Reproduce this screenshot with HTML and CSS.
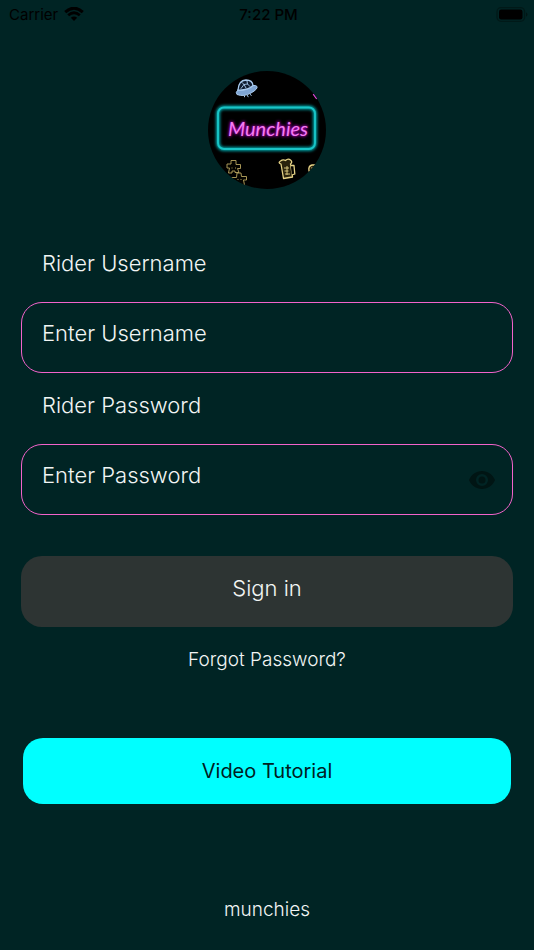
FILE: index.html
```html
<!DOCTYPE html>
<html lang="en">
<head>
<meta charset="utf-8">
<meta name="viewport" content="width=device-width, initial-scale=1">
<title>Munchies Rider</title>
<link rel="stylesheet" href="styles.css">
</head>
<body>
<header class="status">
  <div class="carrier">
    <span>Carrier</span>
    <svg width="20" height="14" viewBox="0 0 20 14" aria-hidden="true">
      <path d="M1.200 5.200Q10-2.800 18.800 5.200" fill="none" stroke="#000" stroke-width="3"/>
      <path d="M4.200 8.300Q10 3.200 15.800 8.300" fill="none" stroke="#000" stroke-width="2.800"/>
      <path d="M6.800 10.800Q10 8 13.200 10.800L10 14Z"/>
    </svg>
  </div>
  <time class="clock">7:22 PM</time>
  <svg class="battery" width="32" height="15" viewBox="0 0 32 15" aria-hidden="true">
    <rect x="1" y=".7" width="27.600" height="13.600" rx="4" fill="none" stroke="#001918" stroke-width="1.300"/>
    <rect x="3" y="2.500" width="23.500" height="10" rx="2.200"/>
    <path d="M30 5.200q3 2.300 0 4.600z" fill="#001615"/>
  </svg>
</header>
<main class="login">
  <svg class="logo" viewBox="0 0 118 118" role="img" aria-label="Munchies">
    <defs>
      <clipPath id="disc"><circle cx="59" cy="59" r="59"/></clipPath>
      <filter id="glow" x="-20%" y="-30%" width="140%" height="160%"><feGaussianBlur stdDeviation="1.700"/></filter>
    </defs>
    <g clip-path="url(#disc)">
      <rect width="118" height="118"/>
      <rect x="10" y="36.500" width="97" height="41.500" rx="6" fill="none" stroke="#00a9ad" stroke-width="4" filter="url(#glow)"/>
      <rect x="10" y="36.500" width="97" height="41.500" rx="6" fill="none" stroke="#19c5c7" stroke-width="1.900"/>
      <text class="neon halo" x="60" y="65" text-anchor="middle" filter="url(#glow)" aria-hidden="true">Munchies</text>
      <text class="neon" x="60" y="65" text-anchor="middle">Munchies</text>
      <g fill="none" stroke="#a9cbef" stroke-linecap="round" stroke-linejoin="round">
        <path d="M30 19Q27 21.500 29 23.500Q36 26 43 22Q50 18 49 15.500Q48 14 45 14.500Q40 19.500 30 19Z" fill="#7fa5d3" stroke-width="1"/>
        <path d="M30 19Q30.500 9.500 38 9Q44.500 9 45 14.500Q40 19.500 30 19Z" fill="#101d31" stroke-width="1.300"/>
        <path d="M33 17.500L36 13.500L34 11.500M36 13.500L39.500 13L42 15.500M39.500 13L39 10M36 13.500L38 17" stroke-width=".9"/>
        <path d="M36.500 25v.8M39.500 24.500l.6 1.300M42.500 23.500l.7 1" stroke-width="1"/>
      </g>
      <path d="M105.500 23l3 4 2-1" fill="none" stroke="#e448dd" stroke-width="2"/>
      <g fill="#050400" stroke="#b9a660" stroke-width=".9" stroke-linejoin="round">
        <path d="M23 89.500h5v4h4.500v4h-3l1.500 4h-4v-1.500h-3v2h-3.500l1-5h-2.500v-4h4zM24 96.500v1M27.500 96.500v1"/>
        <path d="M29 102h4l.5 3.500h5v3.500h-3l1 5h-4l-1.500-2-2 2h-3.500l1-4h-3v-3.500h5zM30 108v1M33 108v1"/>
        <g stroke="#e5d286">
          <path d="M73 93Q69.500 92 72.500 90Q75 88 77.500 89.500Q80 87 82.500 89Q85 91 82.500 93L84.500 106L75.500 107.500Z" fill="#2a230d" stroke-width="1.300"/>
          <path d="M82.800 94.500h3.200l.8 8.500-3 1" stroke-width="1.300"/>
          <path d="M76 97h5M76.500 100h4M77 103h5M79 95v9"/>
          <path d="M101 100q-1-5 3-6h7v7z" fill="#2a230d" stroke-width="1.300"/>
          <path d="M103 97h4M103 99h4"/>
        </g>
      </g>
    </g>
  </svg>
  <form class="form">
    <div class="field">
      <label for="username">Rider Username</label>
      <input id="username" type="text" placeholder="Enter Username">
    </div>
    <div class="field">
      <label for="password">Rider Password</label>
      <div class="secret">
        <input id="password" type="password" placeholder="Enter Password">
        <button class="reveal" type="button" aria-label="Show password">
          <svg width="26" height="18" viewBox="0 0 26 18" aria-hidden="true">
            <path fill="#001514" fill-rule="evenodd" d="M13 0C7 0 2.300 3.600 0 9c2.300 5.400 7 9 13 9s10.700-3.600 13-9C23.700 3.600 19 0 13 0zm0 15a6 6 0 1 1 0-12 6 6 0 0 1 0 12zm0-2.500a3.500 3.500 0 1 0 0-7 3.500 3.500 0 0 0 0 7z"/>
          </svg>
        </button>
      </div>
    </div>
    <button class="signin" type="submit">Sign in</button>
  </form>
  <a class="forgot" href="#forgot">Forgot Password?</a>
  <button class="tutorial" type="button">Video Tutorial</button>
</main>
<footer class="footer">munchies</footer>
</body>
</html>
```
FILE: styles.css
```css
* {
  box-sizing: border-box;
}

body {
  margin: 0;
  min-height: 100vh;
  display: flex;
  flex-direction: column;
  background: #002424;
  color: #f2f5f4;
  font-family: Inter, "Liberation Sans", sans-serif;
  font-weight: 300;
}

button,
input {
  font: inherit;
  color: inherit;
}

.status {
  display: grid;
  grid-template-columns: 1fr auto 1fr;
  align-items: center;
  height: 28px;
  padding: 0 6px 0 9px;
  color: #000;
  font-size: 15px;
  font-weight: 400;
}

.carrier {
  display: flex;
  align-items: center;
  gap: 6px;
}

.clock {
  font-weight: 500;
}

.battery {
  justify-self: end;
}

.login {
  display: flex;
  flex-direction: column;
  padding: 43px 21px 0;
}

.logo {
  align-self: center;
  width: 118px;
  height: 118px;
}

.neon {
  font-family: Lato, sans-serif;
  font-size: 20px;
  font-style: italic;
  font-weight: 400;
  fill: #f57df2;
}

.halo {
  fill: #c400c8;
  stroke: #b000ba;
  stroke-width: 1px;
}

.form {
  display: flex;
  flex-direction: column;
  gap: 18px;
  padding-top: 59px;
}

.field {
  display: flex;
  flex-direction: column;
  gap: 24px;
  font-size: 22px;
}

.field label {
  padding-left: 21px;
  line-height: 30px;
}

.field input {
  width: 100%;
  height: 71px;
  padding: 0 60px 10px 20px;
  border: 1px solid #f263ca;
  border-radius: 21px;
  background: transparent;
}

.field + .field {
  margin-top: -1px;
}

.field input::placeholder {
  color: #f2f5f4;
  opacity: 1;
}

.secret {
  position: relative;
}

.reveal {
  position: absolute;
  top: 0;
  right: 18px;
  height: 100%;
  display: flex;
  align-items: center;
  padding: 0;
  border: 0;
  background: none;
}

.signin {
  height: 71px;
  margin-top: 23px;
  padding: 0 0 8px;
  border: 0;
  border-radius: 21px;
  background: #2d3433;
  font-size: 22px;
}

.forgot {
  align-self: center;
  margin-top: 19px;
  color: inherit;
  font-size: 19px;
  line-height: 28px;
  text-decoration: none;
}

.tutorial {
  height: 66px;
  margin: 64px 2px 0;
  border: 0;
  border-radius: 20px;
  background: #00ffff;
  color: #00201f;
  font-size: 20px;
  font-weight: 400;
}

.footer {
  margin-top: auto;
  padding: 24px 0 26px;
  font-size: 19px;
  line-height: 28px;
  text-align: center;
}
```
